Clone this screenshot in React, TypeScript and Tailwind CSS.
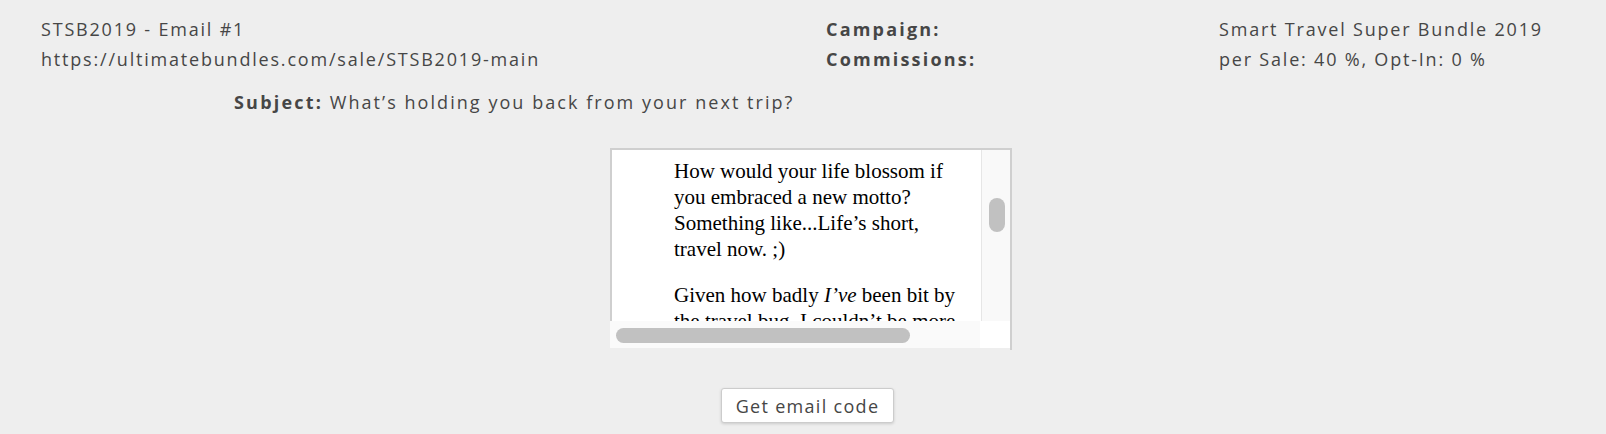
import React from 'react';

const sans = "font-['Open_Sans',sans-serif] tracking-[1.8px]";

const EmailPreview = () => (
  <div className="flex w-[402px] flex-col">
    {/* frame */}
    <div className="flex h-[173px] border-x-2 border-t-2 border-[#cfcfcf] bg-white">
      <div className="flex-1 overflow-hidden">
        <div className="w-[354px] pl-[62px] pt-[8px] font-['Liberation_Serif',serif] text-[21px] leading-[26px] tracking-normal text-black">
          <p className="mb-[20px]">
            How would your life blossom if you embraced a new motto? Something like...Life’s short, travel now. ;)
          </p>
          <p>
            Given how badly <i>I’ve</i> been bit by the travel bug, I couldn’t be more excited to tell you about this.
          </p>
        </div>
      </div>
      {/* vertical scrollbar */}
      <div className="w-[29px] border-l border-[#e6e6e6] bg-[#f9f9f9] pl-[7px] pt-[48px]">
        <div className="h-[34px] w-[16px] rounded-full bg-[#c1c1c1]" />
      </div>
    </div>
    {/* horizontal scrollbar */}
    <div className="flex h-[29px]">
      <div className="h-[27px] w-[370px] bg-[#fafafa] pl-[6px] pt-[7px]">
        <div className="h-[15px] w-[294px] rounded-full bg-[#c1c1c1]" />
      </div>
      <div className="h-[27px] w-[30px] bg-white" />
      <div className="h-[29px] w-[2px] bg-[#cfcfcf]" />
    </div>
  </div>
);

export default function App() {
  return (
    <div className={`h-[434px] bg-[#eeeeee] text-[18px] text-[#464646] ${sans}`}>
      <div className="grid grid-cols-[785px_393px_1fr] pl-[41px] pt-[14px] leading-[30px]">
        <div>
          <div>STSB2019 - Email #1</div>
          <div>https://ultimatebundles.com/sale/STSB2019-main</div>
        </div>
        <div className="font-bold tracking-[2.2px]">
          <div>Campaign:</div>
          <div>Commissions:</div>
        </div>
        <div>
          <div>Smart Travel Super Bundle 2019</div>
          <div>per Sale: 40 %, Opt-In: 0 %</div>
        </div>
      </div>

      <div className="mt-[13px] pl-[234px] leading-[30px] tracking-[2.05px]">
        <span className="font-bold tracking-[2.2px]">Subject:</span> What’s holding you back from your next trip?
      </div>

      <div className="mt-[31px] flex justify-center pl-[16px]">
        <EmailPreview />
      </div>

      <div className="mt-[38px] flex justify-center pl-[9px]">
        <button className="h-[35px] w-[173px] rounded-[3px] border border-[#cccccc] bg-white text-[18px] leading-none tracking-[1.3px] text-[#464646] shadow-[0_1px_3px_rgba(0,0,0,0.15)]">
          Get email code
        </button>
      </div>
    </div>
  );
}
